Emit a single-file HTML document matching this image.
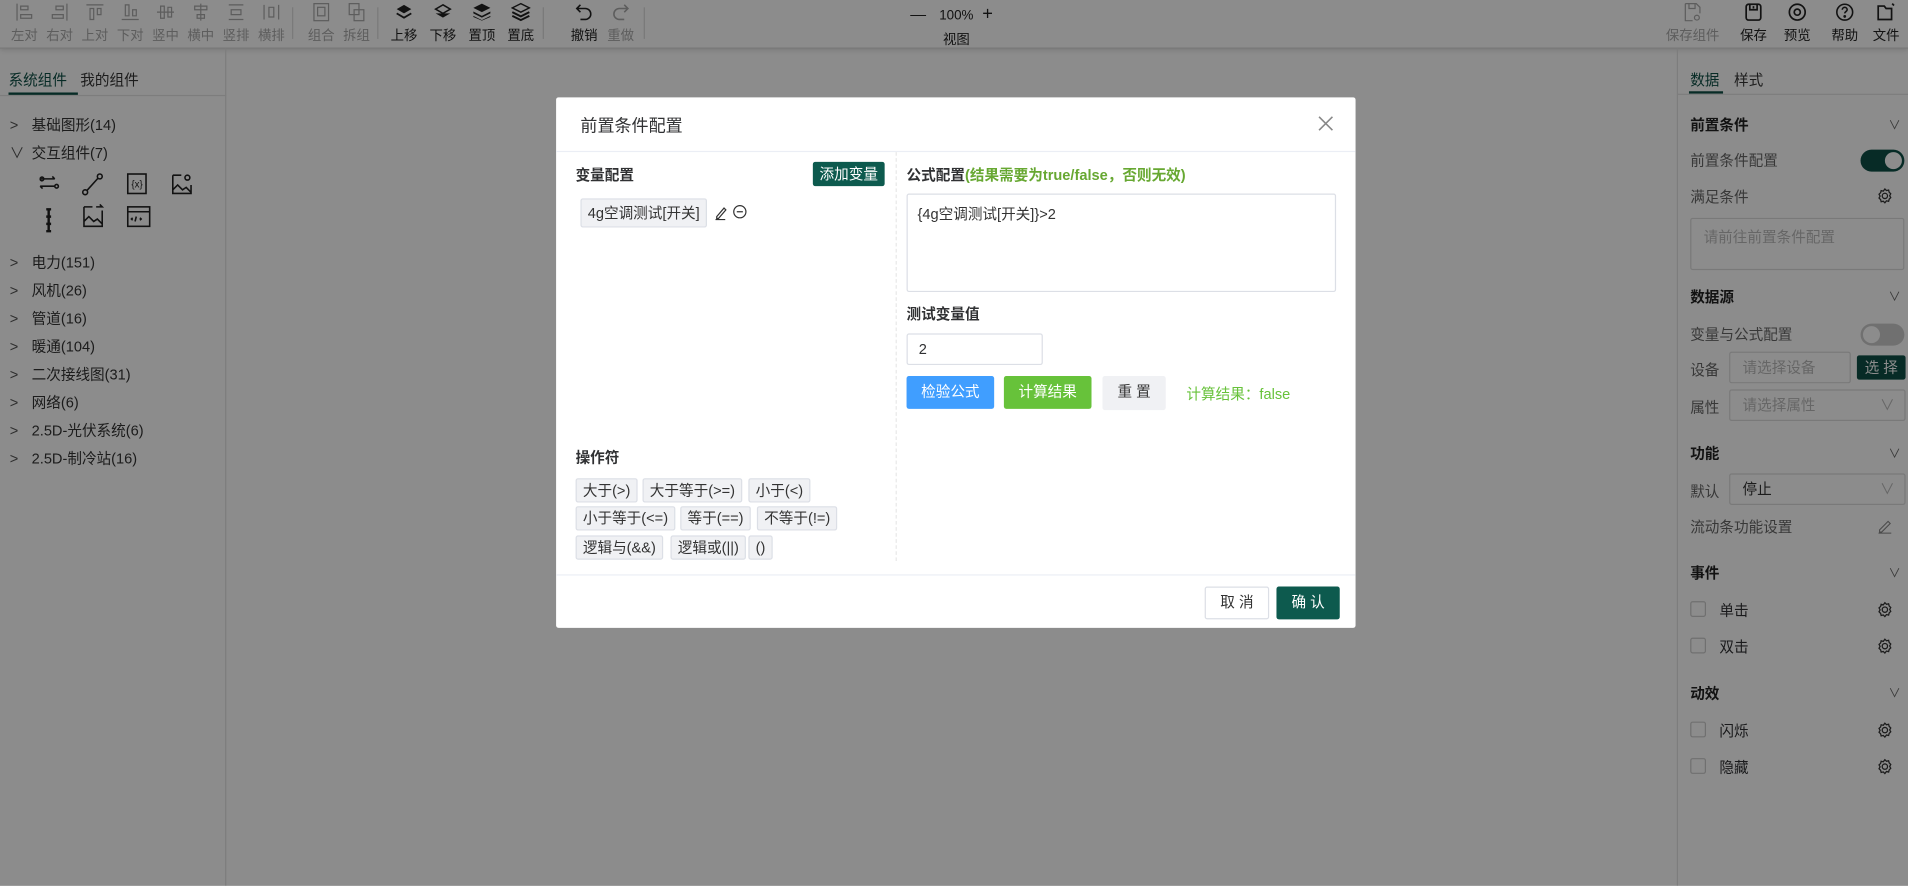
<!DOCTYPE html>
<html><head><meta charset="utf-8">
<style>
*{box-sizing:border-box;margin:0;padding:0}
html,body{width:1908px;height:886px;overflow:hidden;background:#fff}
body{font-family:"Liberation Sans","Noto Sans CJK SC",sans-serif;color:#303133}
#w{width:1568px;height:728px;transform:scale(1.21684);transform-origin:0 0;position:relative;background:#fff;font-size:12px}
.abs{position:absolute}
.tb{position:absolute;left:0;top:0;width:1568px;height:40px;border-bottom:1px solid #ddd;box-shadow:0 1px 4px rgba(0,0,0,.15)}
.ti{position:absolute;top:2px;width:30px;text-align:center;font-size:11px;color:#222}
.ti svg{display:block;margin:0 auto 3px;width:16px;height:16px}
.ti.dis{color:#aaa}
.sep{position:absolute;top:6px;width:1px;height:26px;background:#ddd}
.left{position:absolute;left:0;top:40px;width:186px;height:688px;border-right:1px solid #e4e4e4}
.right{position:absolute;left:1378px;top:40px;width:190px;height:688px;border-left:1px solid #e4e4e4}
.tree{position:absolute;left:8px;font-size:12px;color:#333}
.tree b{font-weight:normal;display:inline-block;width:18px;color:#555}
.rl{position:absolute;left:10px;font-size:12px;color:#666}
.rh{position:absolute;left:10px;font-size:12px;font-weight:bold;color:#222}
.chev{position:absolute;right:6px;font-size:10px;color:#666}
.inp{position:absolute;border:1px solid #ddd;border-radius:2px;color:#bbb;font-size:12px;padding-left:10px}
.cb{position:absolute;left:10px;width:13px;height:13px;border:1px solid #ccc;border-radius:2px}
.gear{position:absolute;right:12px;width:14px;height:14px}
.ov{position:absolute;left:0;top:0;width:1568px;height:728px;background:rgba(0,0,0,.45)}
.dlg{position:absolute;left:457px;top:80px;width:657px;height:436px;background:#fff;border-radius:2px}
.op{position:absolute;height:20px;line-height:18px;border:1px solid #dcdfe6;background:#f0f1f4;border-radius:2px;padding:0 5px;font-size:12px;color:#333}
.btn{position:absolute;height:27px;line-height:27px;text-align:center;font-size:12px;border-radius:2px}
</style></head><body><div id="w">
<div class="tb">
<div class="ti dis" style="left:5px"><svg viewBox="0 0 16 16" fill="none" stroke="#aaa"><path d="M2 1v14M5 3h6v3H5zM5 10h9v3H5z"/></svg>左对</div>
<div class="ti dis" style="left:34px"><svg viewBox="0 0 16 16" fill="none" stroke="#aaa"><path d="M14 1v14M5 3h6v3H5zM2 10h9v3H2z"/></svg>右对</div>
<div class="ti dis" style="left:63px"><svg viewBox="0 0 16 16" fill="none" stroke="#aaa"><path d="M1 2h14M4 5h3v9H4zM10 5h3v5h-3z"/></svg>上对</div>
<div class="ti dis" style="left:92px"><svg viewBox="0 0 16 16" fill="none" stroke="#aaa"><path d="M1 14h14M4 2h3v9H4zM10 6h3v5h-3z"/></svg>下对</div>
<div class="ti dis" style="left:121px"><svg viewBox="0 0 16 16" fill="none" stroke="#aaa"><path d="M1 8h14M4 3h3v10H4zM10 4h3v8h-3z"/></svg>竖中</div>
<div class="ti dis" style="left:150px"><svg viewBox="0 0 16 16" fill="none" stroke="#aaa"><path d="M8 1v14M3 3h10v3H3zM5 10h6v3H5z"/></svg>横中</div>
<div class="ti dis" style="left:179px"><svg viewBox="0 0 16 16" fill="none" stroke="#aaa"><path d="M2 2h12M2 14h12M4 6h8v4H4z"/></svg>竖排</div>
<div class="ti dis" style="left:208px"><svg viewBox="0 0 16 16" fill="none" stroke="#aaa"><path d="M2 2v12M14 2v12M6 4h4v8H6z"/></svg>横排</div>
<div class="sep" style="left:240px"></div>
<div class="ti dis" style="left:249px"><svg viewBox="0 0 16 16" fill="none" stroke="#aaa"><rect x="2" y="1" width="12" height="14"/><rect x="5" y="4" width="6" height="7"/></svg>组合</div>
<div class="ti dis" style="left:278px"><svg viewBox="0 0 16 16" fill="none" stroke="#aaa"><rect x="2" y="1" width="8" height="9"/><rect x="6" y="6" width="8" height="9"/></svg>拆组</div>
<div class="sep" style="left:310px"></div>
<div class="ti" style="left:317px"><svg viewBox="0 0 16 16"><path d="M8 2l6 3.5-6 3.5-6-3.5z" fill="#222"/><path d="M2 9l6 3.5 6-3.5" fill="none" stroke="#222" stroke-width="1.5"/></svg>上移</div>
<div class="ti" style="left:349px"><svg viewBox="0 0 16 16"><path d="M8 2l6 3.5-6 3.5-6-3.5z" fill="none" stroke="#222" stroke-width="1.3"/><path d="M2 9l6 3.5 6-3.5z" fill="#222"/></svg>下移</div>
<div class="ti" style="left:381px"><svg viewBox="0 0 16 16" fill="#222"><path d="M8 1l7 3.5-7 3.5-7-3.5z"/><path d="M1 7.5l7 3.5 7-3.5v1.5l-7 3.5-7-3.5zM1 11l7 3.5 7-3.5v1l-7 3-7-3z"/></svg>置顶</div>
<div class="ti" style="left:413px"><svg viewBox="0 0 16 16"><path d="M8 1l7 3.5-7 3.5-7-3.5z" fill="none" stroke="#222" stroke-width="1.2"/><path d="M1 8l7 3.5 7-3.5M1 11l7 3.5 7-3.5" fill="none" stroke="#222" stroke-width="1.6"/></svg>置底</div>
<div class="sep" style="left:446px"></div>
<div class="ti" style="left:465px"><svg viewBox="0 0 16 16" fill="none" stroke="#222" stroke-width="1.3"><path d="M5 2L2 5l3 3M2 5h7a4.5 4.5 0 010 9H5"/></svg>撤销</div>
<div class="ti dis" style="left:495px"><svg viewBox="0 0 16 16" fill="none" stroke="#aaa" stroke-width="1.3"><path d="M11 2l3 3-3 3M14 5H7a4.5 4.5 0 000 9h4"/></svg>重做</div>
<div class="sep" style="left:529px"></div>
<div class="abs" style="left:748px;top:3px;font-size:13px;color:#222;width:80px">—&nbsp;&nbsp; <span style="font-size:11px">100%</span> &nbsp;<span style="font-size:15px">+</span></div>
<div class="abs" style="left:775px;top:24px;font-size:11px;color:#222">视图</div>
<div class="ti dis" style="left:1366px;width:50px"><svg viewBox="0 0 16 16" fill="none" stroke="#aaa"><path d="M2 1h9l3 3v5M2 1v14h6M5 1v4h5V1"/><circle cx="11.5" cy="12.5" r="2"/></svg>保存组件</div>
<div class="ti" style="left:1426px"><svg viewBox="0 0 16 16" fill="none" stroke="#222" stroke-width="1.4"><rect x="2" y="1.5" width="12" height="13" rx="2"/><path d="M5 2v4h6V2M8 3v2"/></svg>保存</div>
<div class="ti" style="left:1462px"><svg viewBox="0 0 16 16" fill="none" stroke="#222" stroke-width="1.4"><circle cx="8" cy="8" r="6.5"/><circle cx="8" cy="8" r="2.5"/></svg>预览</div>
<div class="ti" style="left:1501px"><svg viewBox="0 0 16 16" fill="none" stroke="#222" stroke-width="1.3"><circle cx="8" cy="8" r="6.5"/><path d="M6 6a2 2 0 114 0c0 1.5-2 1.5-2 3"/><circle cx="8" cy="11.5" r=".5" fill="#222"/></svg>帮助</div>
<div class="ti" style="left:1535px"><svg viewBox="0 0 16 16" fill="none" stroke="#222" stroke-width="1.4"><path d="M1.5 3h5l1.5 2h4.5v9h-11z"/><path d="M13 1l1.5 1.5" /></svg>文件</div>
</div>
<div class="left">
<div class="abs" style="left:7px;top:17px;font-size:12px;color:#0d4f45">系统组件</div>
<div class="abs" style="left:66px;top:17px;font-size:12px;color:#333">我的组件</div>
<div class="abs" style="left:7px;top:36px;width:57px;height:2px;background:#0d4f45"></div>
<div class="abs" style="left:0;top:38px;width:186px;height:1px;background:#e4e4e4"></div>
<div class="tree" style="top:54px"><b>&gt;</b>基础图形(14)</div>
<div class="tree" style="top:77px"><b>∨</b>交互组件(7)</div>
<svg class="abs" style="left:30px;top:102px" width="135" height="50" fill="none" stroke="#222" stroke-width="1.3">
<path d="M3 5h12M15 5l-2-2M3 11h12M3 11l2 2M3 5a1.5 1.5 0 110 .1M15 11a1.5 1.5 0 110 .1"/>
<circle cx="40" cy="16" r="2"/><circle cx="52" cy="3" r="2"/><path d="M41.5 14.5l9-10"/>
<rect x="75" y="1" width="15" height="16"/><text x="78" y="12" font-size="8" fill="#222" stroke="none">{x}</text>
<path d="M112 2h7M112 2v15h15v-7M112 14l4-4 4 4 3-2 4 4"/><circle cx="124" cy="4" r="2"/>
<path d="M10 30v18M8 30h4M8 48h4M8 36h4M8 42h4" stroke-width="2"/>
<path d="M39 28h7M39 28v16h15v-13M39 40l4-4 4 4 3-2 4 4M49 28h5l-2 -2"/>
<rect x="75" y="28" width="18" height="16"/><path d="M75 32h18M81 40l1-4M79 37l-1 1 1 1M85 37l1 1-1 1"/>
</svg>
<div class="tree" style="top:167px"><b>&gt;</b>电力(151)</div>
<div class="tree" style="top:190px"><b>&gt;</b>风机(26)</div>
<div class="tree" style="top:213px"><b>&gt;</b>管道(16)</div>
<div class="tree" style="top:236px"><b>&gt;</b>暖通(104)</div>
<div class="tree" style="top:259px"><b>&gt;</b>二次接线图(31)</div>
<div class="tree" style="top:282px"><b>&gt;</b>网络(6)</div>
<div class="tree" style="top:305px"><b>&gt;</b>2.5D-光伏系统(6)</div>
<div class="tree" style="top:328px"><b>&gt;</b>2.5D-制冷站(16)</div>
</div>
<div class="right">
<div class="abs" style="left:10px;top:17px;color:#0d4f45">数据</div>
<div class="abs" style="left:46px;top:17px;color:#333">样式</div>
<div class="abs" style="left:9px;top:35px;width:28px;height:2px;background:#0d4f45"></div>
<div class="abs" style="left:0;top:37px;width:190px;height:1px;background:#e4e4e4"></div>
<div class="rh" style="top:54px">前置条件</div><div class="chev" style="top:54px">∨</div>
<div class="rl" style="top:83px">前置条件配置</div>
<div class="abs" style="left:150px;top:83px;width:36px;height:18px;border-radius:9px;background:#0d4f45"><div class="abs" style="right:2px;top:2px;width:14px;height:14px;border-radius:7px;background:#fff"></div></div>
<div class="rl" style="top:113px">满足条件</div>
<svg class="gear" style="top:114px" viewBox="0 0 16 16" fill="none" stroke="#333" stroke-width="1.2"><circle cx="8" cy="8" r="2.5"/><path d="M8 1.5l1.5 1.5 2-.5.5 2 1.5 1.5-1 1.8 1 1.8-1.5 1.5-.5 2-2-.5L8 14.5 6.5 13l-2 .5-.5-2L2.5 10l1-1.8-1-1.8L4 5l.5-2 2 .5z"/></svg>
<div class="inp" style="left:10px;top:139px;width:176px;height:43px;padding-top:6px">请前往前置条件配置</div>
<div class="rh" style="top:195px">数据源</div><div class="chev" style="top:195px">∨</div>
<div class="rl" style="top:226px">变量与公式配置</div>
<div class="abs" style="left:150px;top:226px;width:36px;height:18px;border-radius:9px;background:#ccc"><div class="abs" style="left:2px;top:2px;width:14px;height:14px;border-radius:7px;background:#fff"></div></div>
<div class="rl" style="top:255px">设备</div>
<div class="inp" style="left:42px;top:249px;width:100px;height:26px;line-height:24px">请选择设备</div>
<div class="abs" style="left:147px;top:252px;width:40px;height:20px;background:#0d4f45;color:#fff;text-align:center;line-height:20px;font-size:12px;border-radius:2px">选 择</div>
<div class="rl" style="top:286px">属性</div>
<div class="inp" style="left:42px;top:280px;width:145px;height:26px;line-height:24px">请选择属性<span style="position:absolute;right:8px;color:#bbb">∨</span></div>
<div class="rh" style="top:324px">功能</div><div class="chev" style="top:324px">∨</div>
<div class="rl" style="top:355px">默认</div>
<div class="inp" style="left:42px;top:349px;width:145px;height:26px;line-height:24px;color:#333">停止<span style="position:absolute;right:8px;color:#bbb">∨</span></div>
<div class="rl" style="top:384px">流动条功能设置</div>
<svg class="gear" style="top:385px" viewBox="0 0 16 16" fill="none" stroke="#888"><path d="M3 12l8-8 2 2-8 8H3zM2 15h12"/></svg>
<div class="rh" style="top:422px">事件</div><div class="chev" style="top:422px">∨</div>
<div class="cb" style="top:454px"></div><div class="abs" style="left:34px;top:453px">单击</div>
<svg class="gear" style="top:454px" viewBox="0 0 16 16" fill="none" stroke="#333" stroke-width="1.2"><circle cx="8" cy="8" r="2.5"/><path d="M8 1.5l1.5 1.5 2-.5.5 2 1.5 1.5-1 1.8 1 1.8-1.5 1.5-.5 2-2-.5L8 14.5 6.5 13l-2 .5-.5-2L2.5 10l1-1.8-1-1.8L4 5l.5-2 2 .5z"/></svg>
<div class="cb" style="top:484px"></div><div class="abs" style="left:34px;top:483px">双击</div>
<svg class="gear" style="top:484px" viewBox="0 0 16 16" fill="none" stroke="#333" stroke-width="1.2"><circle cx="8" cy="8" r="2.5"/><path d="M8 1.5l1.5 1.5 2-.5.5 2 1.5 1.5-1 1.8 1 1.8-1.5 1.5-.5 2-2-.5L8 14.5 6.5 13l-2 .5-.5-2L2.5 10l1-1.8-1-1.8L4 5l.5-2 2 .5z"/></svg>
<div class="rh" style="top:521px">动效</div><div class="chev" style="top:521px">∨</div>
<div class="cb" style="top:553px"></div><div class="abs" style="left:34px;top:552px">闪烁</div>
<svg class="gear" style="top:553px" viewBox="0 0 16 16" fill="none" stroke="#333" stroke-width="1.2"><circle cx="8" cy="8" r="2.5"/><path d="M8 1.5l1.5 1.5 2-.5.5 2 1.5 1.5-1 1.8 1 1.8-1.5 1.5-.5 2-2-.5L8 14.5 6.5 13l-2 .5-.5-2L2.5 10l1-1.8-1-1.8L4 5l.5-2 2 .5z"/></svg>
<div class="cb" style="top:583px"></div><div class="abs" style="left:34px;top:582px">隐藏</div>
<svg class="gear" style="top:583px" viewBox="0 0 16 16" fill="none" stroke="#333" stroke-width="1.2"><circle cx="8" cy="8" r="2.5"/><path d="M8 1.5l1.5 1.5 2-.5.5 2 1.5 1.5-1 1.8 1 1.8-1.5 1.5-.5 2-2-.5L8 14.5 6.5 13l-2 .5-.5-2L2.5 10l1-1.8-1-1.8L4 5l.5-2 2 .5z"/></svg>
</div>
<div class="ov"></div>
<div class="dlg">
<div class="abs" style="left:20px;top:13px;font-size:14px;color:#303133">前置条件配置</div>
<svg class="abs" style="left:626px;top:15px" width="13" height="13" stroke="#888" stroke-width="1.3"><path d="M1 1l11 11M12 1L1 12"/></svg>
<div class="abs" style="left:0;top:44px;width:657px;height:1px;background:#ebeef5"></div>
<div class="abs" style="left:16px;top:55px;font-size:12px;font-weight:bold">变量配置</div>
<div class="abs" style="left:211px;top:53px;width:59px;height:20px;background:#0d5a4e;color:#fff;font-size:12px;text-align:center;line-height:20px;border-radius:2px">添加变量</div>
<div class="op" style="left:20px;top:83px;height:24px;line-height:22px">4g空调测试[开关]</div>
<svg class="abs" style="left:130px;top:87px" width="28" height="14" fill="none" stroke="#333"><path d="M2 11l6-7 1.5 1.5-6 7H2zM1 13.5h8"/><circle cx="21" cy="7" r="5"/><path d="M18.5 7h5"/></svg>
<div class="abs" style="left:279px;top:45px;width:0;height:336px;border-left:1px dashed #e8e8e8"></div>
<div class="abs" style="left:288px;top:55px;font-size:12px;font-weight:bold">公式配置<span style="color:#67a832">(结果需要为true/false，否则无效)</span></div>
<div class="abs" style="left:288px;top:79px;width:353px;height:81px;border:1px solid #dcdfe6;border-radius:2px;padding:7px 8px;font-size:12px;color:#333">{4g空调测试[开关]}&gt;2</div>
<div class="abs" style="left:288px;top:169px;font-size:12px;font-weight:bold">测试变量值</div>
<div class="abs" style="left:288px;top:194px;width:112px;height:26px;border:1px solid #dcdfe6;border-radius:2px;padding-left:9px;line-height:24px;font-size:12px">2</div>
<div class="btn" style="left:288px;top:229px;width:72px;background:#409eff;color:#fff">检验公式</div>
<div class="btn" style="left:368px;top:229px;width:72px;background:#67c23a;color:#fff">计算结果</div>
<div class="btn" style="left:449px;top:229px;width:52px;background:#f0f1f4;color:#333;height:28px">重 置</div>
<div class="abs" style="left:518px;top:235px;font-size:12px;color:#67c23a">计算结果：false</div>
<div class="abs" style="left:16px;top:287px;font-size:12px;font-weight:bold">操作符</div>
<div class="op" style="left:16px;top:313px">大于(&gt;)</div>
<div class="op" style="left:71px;top:313px">大于等于(&gt;=)</div>
<div class="op" style="left:158px;top:313px">小于(&lt;)</div>
<div class="op" style="left:16px;top:336px">小于等于(&lt;=)</div>
<div class="op" style="left:102px;top:336px">等于(==)</div>
<div class="op" style="left:165px;top:336px">不等于(!=)</div>
<div class="op" style="left:16px;top:360px">逻辑与(&amp;&amp;)</div>
<div class="op" style="left:94px;top:360px">逻辑或(||)</div>
<div class="op" style="left:158px;top:360px">()</div>
<div class="abs" style="left:0;top:392px;width:657px;height:1px;background:#ebeef5"></div>
<div class="btn" style="left:533px;top:402px;width:53px;height:27px;border:1px solid #dcdfe6;background:#fff;color:#333;line-height:25px">取 消</div>
<div class="btn" style="left:592px;top:402px;width:52px;height:27px;background:#0d5a4e;color:#fff">确 认</div>
</div>
</div></body></html>
